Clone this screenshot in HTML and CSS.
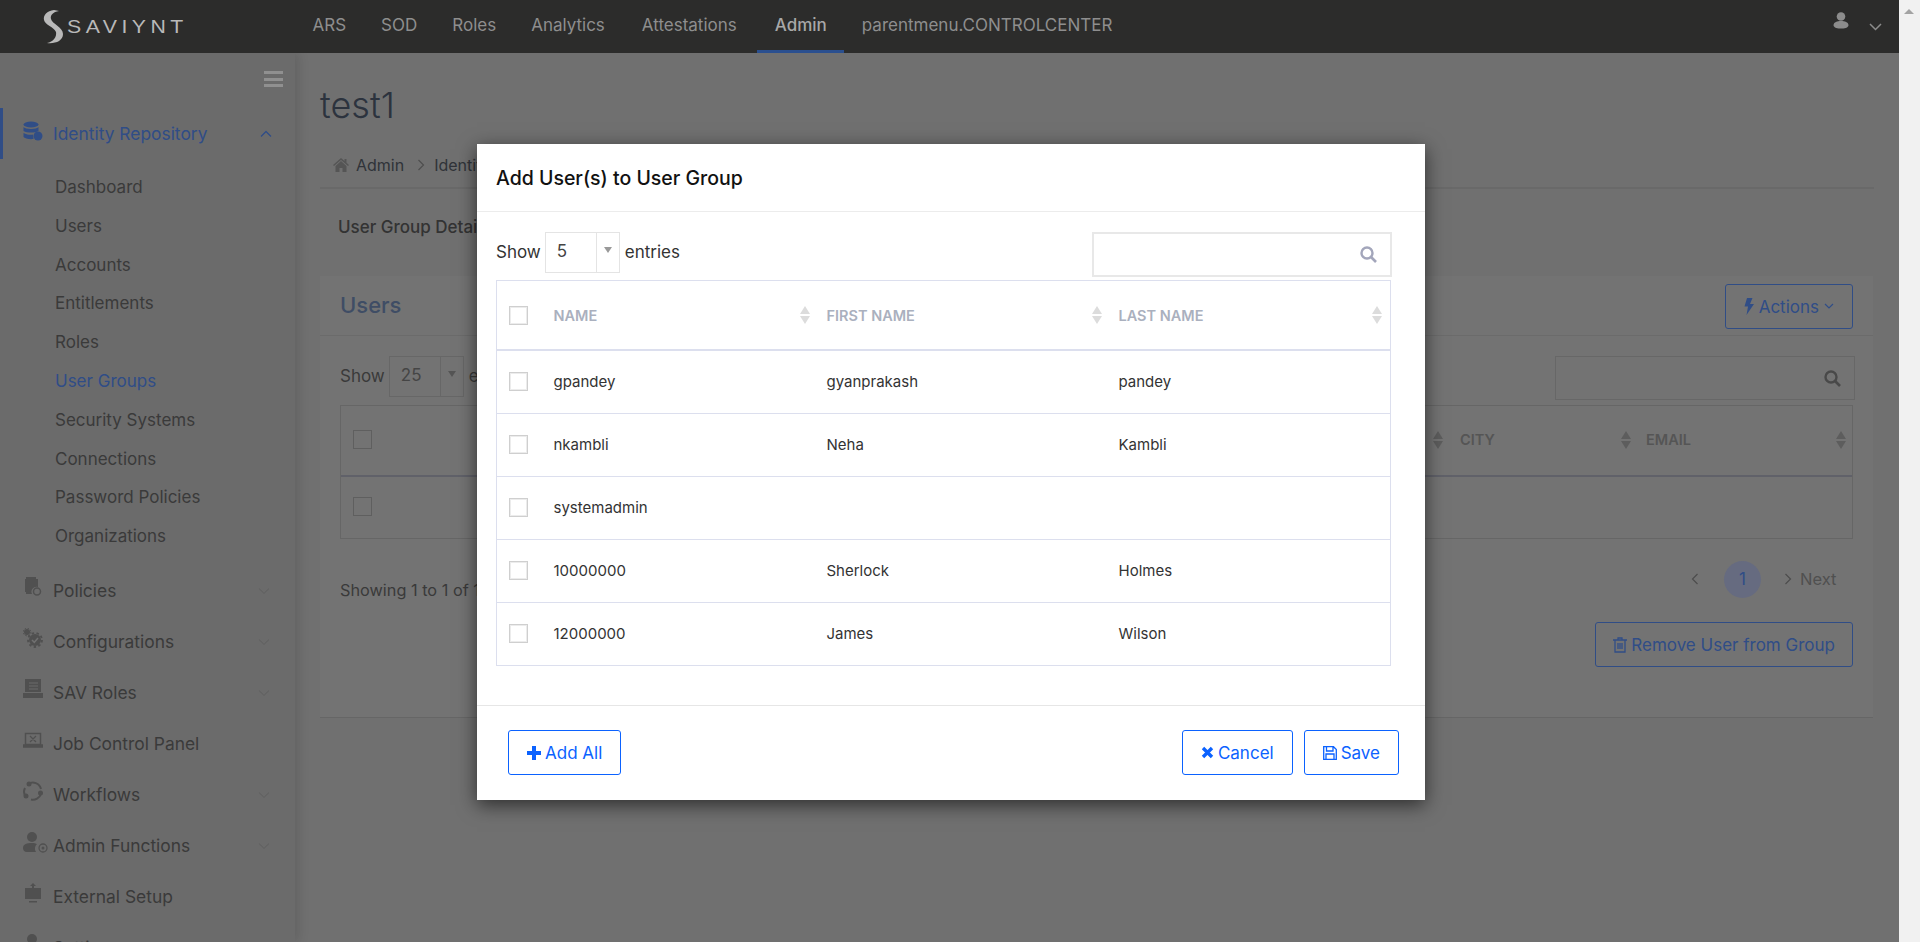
FILE: index.html
```html
<!DOCTYPE html>
<html lang="en">
<head>
  <meta charset="UTF-8" />
  <title>Saviynt - test1</title>
  <link rel="stylesheet" href="styles.css">
</head>
<body>

<div class="page">
  <header class="topbar">
    <div class="logo">
      <svg class="logo-mark" width="21" height="34" viewBox="0 0 21 34"><path d="M11 0 C4 1 0 5 1 10 C2 15 11 17 13 22 C14 27 10 32 4 33 C12 34 20 31 20 24 C20 17 9 14 8 9 C7 5 10 2 16 1 Z" fill="#b9b9b9"/></svg>
      <span class="logo-text">SAVIYNT</span>
    </div>
    <nav class="mainnav">
      <a>ARS</a><a>SOD</a><a>Roles</a><a>Analytics</a><a class="attest">Attestations</a><a class="active">Admin</a><a>parentmenu.CONTROLCENTER</a>
    </nav>
    <div class="usermenu">
      <svg width="16" height="17" viewBox="0 0 16 17"><circle cx="8" cy="4.500" r="4.300" fill="#8c8c8c"/><path d="M0.500 13 C1 10 4 9 8 9 C12 9 15 10 15.500 13 C15.500 16 11 16.500 8 16.500 C5 16.500 0.500 16 0.500 13Z" fill="#8c8c8c"/></svg>
      <svg class="user-caret" width="13" height="8" viewBox="0 0 13 8"><path d="M1 1 L6.500 6.500 L12 1" fill="none" stroke="#8c8c8c" stroke-width="1.500"/></svg>
    </div>
  </header>

  <div class="layout">
    <aside class="sidebar">
      <div class="burger"><span></span><span></span><span></span></div>

      <div class="side-item open">
        <svg class="side-icon" width="20" height="20" viewBox="0 0 20 20"><ellipse cx="8" cy="3.500" rx="7.500" ry="3" fill="currentColor"/><path d="M0.500 6 C2 8.500 14 8.500 15.500 6 V10 C12 12 4 12 0.500 10Z M0.500 12 C4 14 9 14 10 13.500 L10.500 18 C6 18.500 1.500 17.500 0.500 16Z" fill="currentColor"/><circle cx="15" cy="15" r="4.500" fill="currentColor"/></svg>
        <span class="side-label">Identity Repository</span>
        <svg class="side-caret" width="12" height="8" viewBox="0 0 12 8"><path d="M1 6.500 L6 1.500 L11 6.500" fill="none" stroke="currentColor" stroke-width="1.400"/></svg>
      </div>
      <ul class="subnav">
        <li>Dashboard</li>
        <li>Users</li>
        <li>Accounts</li>
        <li>Entitlements</li>
        <li>Roles</li>
        <li class="current">User Groups</li>
        <li>Security Systems</li>
        <li>Connections</li>
        <li>Password Policies</li>
        <li>Organizations</li>
      </ul>

      <div class="side-item">
        <svg class="side-icon" width="20" height="20" viewBox="0 0 20 20"><path d="M3 0 H13 V2 H15 V10 A5 5 0 0 0 9 17 H3 V15 H2 V2 H3Z" fill="currentColor"/><circle cx="14" cy="14.500" r="3.500" fill="none" stroke="currentColor" stroke-width="1.500"/></svg>
        <span class="side-label">Policies</span>
        <svg class="side-caret" width="12" height="8" viewBox="0 0 12 8"><path d="M1 1.500 L6 6.500 L11 1.500" fill="none" stroke="currentColor" stroke-width="1.200"/></svg>
      </div>
      <div class="side-item">
        <svg class="side-icon" width="20" height="20" viewBox="0 0 20 20"><circle cx="4" cy="4" r="3" fill="currentColor"/><circle cx="4" cy="4" r="3.800" fill="none" stroke="currentColor" stroke-width="1" stroke-dasharray="1.500 1.500"/><circle cx="12" cy="12" r="6" fill="currentColor"/><circle cx="12" cy="12" r="7" fill="none" stroke="currentColor" stroke-width="1.800" stroke-dasharray="2.500 2.400"/><path d="M9 12 L11.300 14.300 L15 10" fill="none" stroke="#bbb" stroke-width="1.500"/></svg>
        <span class="side-label">Configurations</span>
        <svg class="side-caret" width="12" height="8" viewBox="0 0 12 8"><path d="M1 1.500 L6 6.500 L11 1.500" fill="none" stroke="currentColor" stroke-width="1.200"/></svg>
      </div>
      <div class="side-item">
        <svg class="side-icon" width="20" height="20" viewBox="0 0 20 20"><path d="M2 0 H18 V13 H2Z M0 14 H20 V19 H0Z" fill="currentColor"/><path d="M6 4 H15 M6 7 H15 M6 10 H15" stroke="#b3b3b3" stroke-width="1"/></svg>
        <span class="side-label">SAV Roles</span>
        <svg class="side-caret" width="12" height="8" viewBox="0 0 12 8"><path d="M1 1.500 L6 6.500 L11 1.500" fill="none" stroke="currentColor" stroke-width="1.200"/></svg>
      </div>
      <div class="side-item">
        <svg class="side-icon" width="20" height="20" viewBox="0 0 20 20"><path d="M2.500 3.500 H17.500 V14.500 H2.500Z" fill="none" stroke="currentColor" stroke-width="1.500"/><path d="M0 15 H20 V17 H0Z M7 6 L13 12 M13 6 L7 12" fill="currentColor" stroke="currentColor" stroke-width="1.300"/></svg>
        <span class="side-label">Job Control Panel</span>
      </div>
      <div class="side-item">
        <svg class="side-icon" width="20" height="20" viewBox="0 0 20 20"><path d="M5 3 A8.500 8.500 0 0 1 18 8 M18 13 A8.500 8.500 0 0 1 8 18.500 M3 16 A8.500 8.500 0 0 1 2 7" fill="none" stroke="currentColor" stroke-width="2"/><circle cx="6" cy="3" r="2.500" fill="currentColor"/><circle cx="17.500" cy="12" r="2.500" fill="currentColor"/><circle cx="3" cy="15" r="2.500" fill="currentColor"/></svg>
        <span class="side-label">Workflows</span>
        <svg class="side-caret" width="12" height="8" viewBox="0 0 12 8"><path d="M1 1.500 L6 6.500 L11 1.500" fill="none" stroke="currentColor" stroke-width="1.200"/></svg>
      </div>
      <div class="side-item">
        <svg class="side-icon wide" width="25" height="21" viewBox="0 0 25 21"><circle cx="9" cy="5" r="5" fill="currentColor"/><path d="M0 16 C0 12 4 11 9 11 C11 11 13 11.500 14 12 A6 6 0 0 0 13 20 H4 C1 20 0 18 0 16Z" fill="currentColor"/><circle cx="20" cy="16" r="4" fill="none" stroke="currentColor" stroke-width="1.300"/><circle cx="20" cy="16" r="1.500" fill="currentColor"/></svg>
        <span class="side-label tight">Admin Functions</span>
        <svg class="side-caret" width="12" height="8" viewBox="0 0 12 8"><path d="M1 1.500 L6 6.500 L11 1.500" fill="none" stroke="currentColor" stroke-width="1.200"/></svg>
      </div>
      <div class="side-item">
        <svg class="side-icon" width="20" height="20" viewBox="0 0 20 20"><path d="M10 0 L13 3 H11 V5 H18 V16 H2 V5 H9 V3 H7Z M6 18 H14 V19.500 H6Z" fill="currentColor"/></svg>
        <span class="side-label">External Setup</span>
      </div>
      <div class="side-item">
        <svg class="side-icon" width="20" height="20" viewBox="0 0 20 20"><circle cx="9" cy="5" r="5" fill="currentColor"/><path d="M0 20 C0 13 4 11 9 11 C14 11 18 13 18 20Z" fill="currentColor"/></svg>
        <span class="side-label">Settings</span>
      </div>
    </aside>

    <main class="content">
      <h1 class="page-title">test1</h1>
      <div class="crumbs">
        <svg width="16" height="14" viewBox="0 0 16 14"><path d="M8 0 L11.500 3 V1 H13.500 V4.800 L16 7 L15 8 L8 2 L1 8 L0 7Z M2.500 8 L8 3 L13.500 8 V14 H9.500 V10 H6.500 V14 H2.500Z" fill="#8e8e8e"/></svg>
        <span>Admin</span>
        <svg class="crumb-sep" width="8" height="12" viewBox="0 0 8 12"><path d="M1.500 1 L6.500 6 L1.500 11" fill="none" stroke="#828282" stroke-width="1.200"/></svg>
        <span>Identity Repository</span>
      </div>
      <div class="detail-title">User Group Details</div>

      <section class="card">
        <div class="card-head">
          <h2>Users</h2>
          <button class="outline dim actions">
            <svg width="10" height="17" viewBox="0 0 10 17"><path d="M3 0 H8.500 L6 6 H10 L2.500 17 L4 8.500 H0.500Z" fill="currentColor"/></svg>
            Actions
            <svg width="10" height="7" viewBox="0 0 10 7"><path d="M1 1 L5 5 L9 1" fill="none" stroke="currentColor" stroke-width="1.200"/></svg>
          </button>
        </div>
        <div class="card-body">
          <div class="filters under">
            <span>Show</span>
            <div class="pagesize"><span class="size-value">25</span><span class="size-arrow"><i></i></span></div>
            <span>entries</span>
            <div class="searchbox"><svg width="17" height="17" viewBox="0 0 17 17"><circle cx="7" cy="7" r="5.500" fill="none" stroke="#7a7a7a" stroke-width="2.400"/><path d="M11 11 L16 16" stroke="#7a7a7a" stroke-width="2.600"/></svg></div>
          </div>
          <div class="under-table">
            <div class="under-head">
              <span class="box under-box"></span>
              <span class="under-col state"><b class="sort"></b></span>
              <span class="under-col city">CITY<b class="sort"></b></span>
              <span class="under-col email">EMAIL<b class="sort"></b></span>
            </div>
            <div class="under-row"><span class="box under-box"></span></div>
          </div>
          <div class="under-foot">
            <span class="showing">Showing 1 to 1 of 1 entries</span>
            <div class="pager">
              <svg width="8" height="12" viewBox="0 0 8 12"><path d="M6.500 1 L1.500 6 L6.500 11" fill="none" stroke="#7f7f7f" stroke-width="1.200"/></svg>
              <span class="page-num">1</span>
              <svg width="8" height="12" viewBox="0 0 8 12"><path d="M1.500 1 L6.500 6 L1.500 11" fill="none" stroke="#7f7f7f" stroke-width="1.200"/></svg>
              <span class="next">Next</span>
            </div>
          </div>
          <div class="remove-row">
            <button class="outline dim remove">
              <svg width="14" height="16" viewBox="0 0 14 16"><path d="M0 3 H14 M2 3 V15 H12 V3 M5 3 V1 H9 V3 M5 6 V12 M7 6 V12 M9 6 V12" fill="none" stroke="currentColor" stroke-width="1.300"/></svg>
              Remove User from Group
            </button>
          </div>
        </div>
      </section>
      <div class="card-foot"></div>
    </main>
  </div>
</div>

<div class="overlay">
  <div class="modal">
    <div class="modal-head">Add User(s) to User Group</div>
    <div class="modal-body">
      <div class="filters modal-filters">
        <span>Show</span>
        <div class="pagesize"><span class="size-value">5</span><span class="size-arrow"><i></i></span></div>
        <span>entries</span>
        <div class="searchbox"><svg width="17" height="17" viewBox="0 0 17 17"><circle cx="7" cy="7" r="5.500" fill="none" stroke="#a3a6bb" stroke-width="2.400"/><path d="M11 11 L16 16" stroke="#a3a6bb" stroke-width="2.600"/></svg></div>
      </div>
      <table class="users">
        <thead>
          <tr>
            <th class="check"><span class="box"></span></th>
            <th class="col-name">NAME<b class="sort"></b></th>
            <th class="col-first">FIRST NAME<b class="sort"></b></th>
            <th class="col-last">LAST NAME<b class="sort"></b></th>
          </tr>
        </thead>
        <tbody>
          <tr><td class="check"><span class="box"></span></td><td>gpandey</td><td>gyanprakash</td><td>pandey</td></tr>
          <tr><td class="check"><span class="box"></span></td><td>nkambli</td><td>Neha</td><td>Kambli</td></tr>
          <tr><td class="check"><span class="box"></span></td><td>systemadmin</td><td></td><td></td></tr>
          <tr><td class="check"><span class="box"></span></td><td>10000000</td><td>Sherlock</td><td>Holmes</td></tr>
          <tr><td class="check"><span class="box"></span></td><td>12000000</td><td>James</td><td>Wilson</td></tr>
        </tbody>
      </table>
    </div>
    <div class="modal-foot">
      <button class="outline add-all">
        <svg width="14" height="14" viewBox="0 0 14 14"><path d="M5 0 H9 V5 H14 V9 H9 V14 H5 V9 H0 V5 H5Z" fill="currentColor"/></svg>
        Add All
      </button>
      <button class="outline">
        <svg width="13" height="13" viewBox="0 0 13 13"><path d="M2 2 L11 11 M11 2 L2 11" stroke="currentColor" stroke-width="3.400"/></svg>
        Cancel
      </button>
      <button class="outline">
        <svg width="14" height="14" viewBox="0 0 14 14"><path d="M0.700 0.700 H10.500 L13.300 3.500 V13.300 H0.700Z M3.500 0.700 V5 H10 V0.700 M3 13.300 V8 H11 V13.300" fill="none" stroke="currentColor" stroke-width="1.300"/></svg>
        Save
      </button>
    </div>
  </div>
</div>

<div class="scrollbar"><i></i></div>

</body>
</html>
```

FILE: styles.css
```css
html, body {
  margin: 0;
  height: 942px;
  overflow: hidden;
}

body {
  font-family: 'Inter', 'Roboto', sans-serif;
  font-size: 17px;
  color: #212529;
  background: #bbb;
}

.page {
  width: 1899px;
  height: 942px;
  overflow: hidden;
}

/* top bar sits above the backdrop */
.topbar {
  height: 53px;
  background: #2c2c2b;
  display: flex;
  color: #8e8e8e;
  position: relative;
  z-index: 6;
  width: 1899px;
}

.logo {
  width: 295px;
  flex: none;
  display: flex;
  align-items: center;
  padding-left: 43px;
  box-sizing: border-box;
}

.logo-text {
  font-family: 'Liberation Sans', sans-serif;
  font-size: 19px;
  letter-spacing: 4px;
  color: #b9b9b9;
  margin-left: 3px;
  transform: scaleX(1.120);
  transform-origin: left center;
}

.mainnav {
  display: flex;
}

.mainnav a {
  display: block;
  padding: 0 17.500px;
  line-height: 50px;
  height: 50px;
  font-size: 17px;
}

.mainnav a.attest {
  margin-left: 2px;
}

.mainnav a.active {
  margin-left: 3px;
  font-weight: 500;
  color: #a8a8a8;
  border-bottom: 3px solid #2a4f8f;
}

.usermenu {
  margin-left: auto;
  margin-right: 17px;
  display: flex;
  gap: 20px;
  padding-top: 12px;
  height: 20px;
}

.user-caret {
  margin-top: 11px;
}

/* sidebar + content */
.layout {
  display: flex;
  height: 889px;
}

.sidebar {
  width: 295px;
  flex: none;
  background: #b3b3b3;
  box-shadow: 4px 0 10px rgba(0, 0, 0, 0.12);
  position: relative;
  overflow: hidden;
}

.burger {
  display: flex;
  flex-direction: column;
  gap: 3.500px;
  align-items: flex-end;
  padding: 18px 12px 0 0;
  height: 37px;
}

.burger span {
  width: 19px;
  height: 3px;
  background: #f0f0f0;
}

.side-item {
  display: flex;
  align-items: center;
  height: 51px;
  padding-left: 23px;
  font-size: 17.400px;
  color: #626262;
  position: relative;
}

.side-icon {
  color: #858585;
  flex: none;
  margin-top: -6px;
}

.side-label {
  margin-left: 10px;
}

.side-label.tight {
  margin-left: 5px;
}

.side-caret {
  position: absolute;
  right: 25px;
  top: 22px;
  color: #a5a5a5;
}

.side-item.open {
  color: #5080e0;
  border-left: 3px solid #5080e0;
  padding-left: 20px;
}

.side-item.open .side-icon,
.side-item.open .side-caret {
  color: #5080e0;
}

.side-item.open .side-caret {
  right: 23px;
}

.subnav {
  list-style: none;
  margin: 9px 0;
  padding: 0 0 0 55px;
  color: #626262;
}

.subnav li {
  height: 38.800px;
  line-height: 38.800px;
  font-size: 17px;
}

.subnav li.current {
  color: #5080e0;
}

.content {
  flex: 1;
  padding: 0 25px;
  min-width: 0;
}

.page-title {
  font-weight: 300;
  font-size: 36px;
  margin: 0;
  padding-top: 27px;
  height: 50px;
  line-height: 50px;
  color: #4a5568;
}

.crumbs {
  display: flex;
  align-items: center;
  gap: 7px;
  box-sizing: border-box;
  height: 48px;
  margin-top: 11px;
  padding: 2px 0 0 13px;
  border-bottom: 2px solid #b0b0b0;
  color: #50565f;
  font-size: 16px;
}

.crumb-sep {
  margin: 0 2px 0 6px;
}

.detail-title {
  padding-left: 18px;
  font-weight: 500;
  font-size: 17px;
  line-height: 20px;
  margin-top: 28px;
  color: #555;
}

.card {
  margin-top: 39px;
  background: #c0c0c0;
  width: 1553px;
  height: 410px;
}

.card-head {
  display: flex;
  justify-content: space-between;
  align-items: center;
  height: 57px;
  padding: 2px 20px 0;
  border-bottom: 1px solid #b3b3b3;
}

.card-head h2 {
  font-size: 22px;
  font-weight: 500;
  margin: -3px 0 0;
  color: #6a80a8;
}

.card-body {
  padding: 20px 20px 0;
}

/* outline buttons */
.outline {
  font: inherit;
  font-size: 17px;
  height: 45px;
  padding: 0 18px;
  background: #fff;
  color: #0b62ff;
  border: 1px solid #0b62ff;
  border-radius: 3px;
  display: inline-flex;
  align-items: center;
  gap: 4px;
}

.outline.dim {
  background: transparent;
  color: #5080e0;
  border-color: #5080e0;
}

.outline.actions {
  gap: 5px;
}

.outline.remove {
  padding: 0 17px;
}

/* show entries + search row */
.filters {
  display: flex;
  align-items: flex-start;
  height: 44px;
  color: #333;
  line-height: 41px;
}

.pagesize {
  display: flex;
  width: 75px;
  height: 41px;
  border: 1px solid #e4e4e4;
  margin: 0 5px 0 4px;
  box-sizing: border-box;
}

.size-value {
  width: 51px;
  padding-left: 11px;
  line-height: 37px;
  color: #444;
  box-sizing: border-box;
  border-right: 1px solid #e4e4e4;
}

.size-arrow {
  flex: 1;
  position: relative;
}

.size-arrow i {
  position: absolute;
  left: 7px;
  top: 14px;
  border: 4px solid transparent;
  border-top: 6px solid #999;
  border-bottom: 0;
}

.searchbox {
  margin-left: auto;
  width: 300px;
  height: 44px;
  border: 1px solid #e8e8e8;
  box-sizing: border-box;
  display: flex;
  align-items: center;
  justify-content: flex-end;
  padding-right: 13px;
}

.filters.under {
  color: #626262;
}

.under .pagesize,
.under .size-value,
.under .searchbox {
  border-color: #acacac;
}

.under .searchbox {
  margin-right: -2px;
}

.under .size-value {
  color: #747474;
}

.under .size-arrow i {
  border-top-color: #8e8e8e;
}

/* table behind the dialog */
.under-table {
  margin-top: 5px;
  width: 1513px;
  border: 1px solid #aaa;
  box-sizing: border-box;
}

.under-head {
  height: 67px;
  padding: 0 0 2px 12px;
  border-bottom: 2px solid #a0a2b0;
  position: relative;
  display: flex;
  align-items: center;
}

.under-row {
  height: 58px;
  display: flex;
  align-items: center;
  padding: 0 0 3px 12px;
}

.under-col {
  position: absolute;
  font-weight: 600;
  font-size: 14.500px;
  line-height: 18px;
  color: #8e8e8e;
  top: 25px;
  height: 18px;
}

.under-col.state { left: 1087px; width: 16px; }
.under-col.city { left: 1119px; width: 172px; }
.under-col.email { left: 1305px; width: 201px; }

.under-foot {
  display: flex;
  justify-content: space-between;
  align-items: flex-start;
  margin-top: 21px;
  width: 1513px;
  height: 38px;
  color: #626262;
}

.showing {
  margin-top: 20px;
  font-size: 16.300px;
}

.pager {
  display: flex;
  align-items: center;
  height: 38px;
  margin-right: 16.500px;
  color: #858585;
}

.page-num {
  width: 37px;
  height: 37px;
  line-height: 37px;
  margin: 0 23px 0 25px;
  border-radius: 50%;
  text-align: center;
  background: #aab2d5;
  color: #5080e0;
}

.next {
  margin-left: 8px;
  font-size: 16.500px;
}

.remove-row {
  width: 1513px;
  margin-top: 24px;
  display: flex;
  justify-content: flex-end;
}

.card-foot {
  width: 1553px;
  height: 31px;
  background: #c0c0c0;
  border-bottom: 1px solid #aaa;
}

/* shared table bits */
.box {
  display: block;
  width: 17px;
  height: 17px;
  border: 1px solid #cfcfcf;
  box-shadow: inset 0 0 0 1px #ececec;
  background: #fff;
}

.under-box {
  background: transparent;
  border-color: #9f9f9f;
  box-shadow: none;
}

.sort {
  position: absolute;
  right: 0;
  top: 50%;
  width: 11px;
  height: 18px;
  margin-top: -9px;
}

.sort::before,
.sort::after {
  content: "";
  position: absolute;
  left: 0;
  border-left: 5.500px solid transparent;
  border-right: 5.500px solid transparent;
}

.sort::before {
  top: 0;
  border-bottom: 8px solid #dcdcdc;
}

.sort::after {
  bottom: 0;
  border-top: 8px solid #dcdcdc;
}

.under-col .sort::before { border-bottom-color: #9b9b9b; }
.under-col .sort::after { border-top-color: #9b9b9b; }

/* modal */
.overlay {
  position: absolute;
  left: 0;
  top: 0;
  width: 1899px;
  height: 942px;
  background: rgba(0, 0, 0, 0.4);
  z-index: 5;
}

.modal {
  margin: 144px 0 0 477px;
  width: 948px;
  height: 656px;
  background: #fff;
  box-shadow: 0 5px 18px rgba(0, 0, 0, 0.6);
  display: flex;
  flex-direction: column;
  color: #333;
}

.modal-head {
  height: 67px;
  line-height: 68px;
  padding-left: 19px;
  font-size: 19.500px;
  font-weight: 500;
  color: #111;
  border-bottom: 1px solid #ececec;
}

.modal-body {
  flex: 1;
  padding: 20px 33px 0 19px;
}

.modal-filters {
  height: 45px;
}

.modal-filters .searchbox {
  height: 45px;
  border-width: 2px;
}

.users {
  margin-top: 3px;
  width: 895px;
  border-collapse: collapse;
  table-layout: fixed;
  font-size: 15px;
  border: 1px solid #dcdfee;
}

.users th, .users td {
  padding: 0;
  text-align: left;
  border-bottom: 1px solid #dcdfee;
  position: relative;
}

.users th {
  height: 68px;
  font-size: 14.500px;
  font-weight: 600;
  color: #aab0be;
  border-bottom-width: 2px;
}

.users td {
  height: 60px;
  padding-bottom: 2px;
}

.users .check { width: 57px; padding-left: 12px; box-sizing: border-box; }
.users td.check { box-sizing: content-box; width: 45px; }
.users .col-name { width: 273px; }
.users .col-first { width: 292px; }

.users th .sort { right: 16px; }
.users th.col-last .sort { right: 7px; }

.modal-foot {
  height: 95px;
  box-sizing: border-box;
  border-top: 1px solid #e6e6e6;
  display: flex;
  gap: 11px;
  padding: 24px 26px 0 31px;
}

.add-all {
  margin-right: auto;
}

/* scrollbar */
.scrollbar {
  position: absolute;
  right: 0;
  top: 0;
  width: 21px;
  height: 942px;
  background: #f1f1f1;
}

.scrollbar i {
  position: absolute;
  left: 5px;
  top: 9px;
  border: 5px solid transparent;
  border-bottom: 5px solid #a3a3a3;
  border-top: 0;
}
```
